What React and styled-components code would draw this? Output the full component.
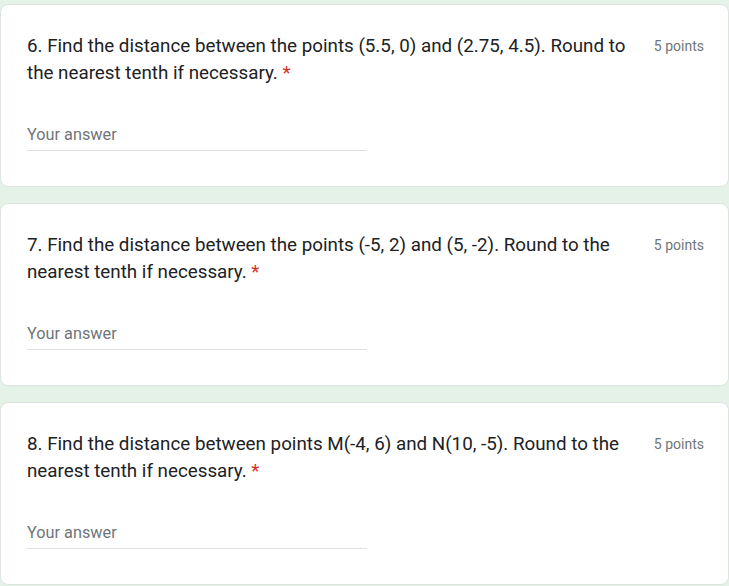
import React from "react";
import styled, { createGlobalStyle } from "styled-components";

const Global = createGlobalStyle`
  html, body { margin: 0; padding: 0; }
  body {
    background: #e4f2e7;
    font-family: Roboto, "Noto Sans", Arial, sans-serif;
    overflow: hidden;
  }
`;

const Page = styled.div`
  display: flex;
  flex-direction: column;
  gap: 16px;
  padding-top: 4px;
`;

const Card = styled.section`
  background: #fff;
  border: 1px solid #dde3de;
  border-radius: 8px;
  height: 183px;
  box-sizing: border-box;
  padding: 28px 24px 0 26px;
  display: flex;
  flex-direction: column;
`;

const Header = styled.div`
  display: flex;
  align-items: flex-start;
  gap: 16px;
`;

const Question = styled.div`
  flex: 1;
  max-width: 614px;
  font-family: Roboto, Arial, sans-serif;
  font-size: 18.8px;
  line-height: 27px;
  color: #202124;
`;

const Required = styled.span`
  color: #d93025;
`;

const Points = styled.div`
  margin-left: auto;
  font-size: 14px;
  line-height: 27px;
  color: #70757a;
  white-space: nowrap;
`;

const Answer = styled.div`
  margin-top: 38px;
  width: 340px;
  border-bottom: 1px solid #e0e0e0;
  padding-bottom: 5px;
  font-size: 16.3px;
  line-height: 20px;
  color: #70757a;
`;

const questions = [
  "6. Find the distance between the points (5.5, 0) and (2.75, 4.5). Round to the nearest tenth if necessary.",
  "7. Find the distance between the points (-5, 2) and (5, -2). Round to the nearest tenth if necessary.",
  "8. Find the distance between points M(-4, 6) and N(10, -5). Round to the nearest tenth if necessary.",
];

export default function App() {
  return (
    <>
      <Global />
      <Page>
        {questions.map((q) => (
          <Card key={q}>
            <Header>
              <Question>
                {q}
                <Required>{"\u00a0*"}</Required>
              </Question>
              <Points>5 points</Points>
            </Header>
            <Answer>Your answer</Answer>
          </Card>
        ))}
      </Page>
    </>
  );
}
